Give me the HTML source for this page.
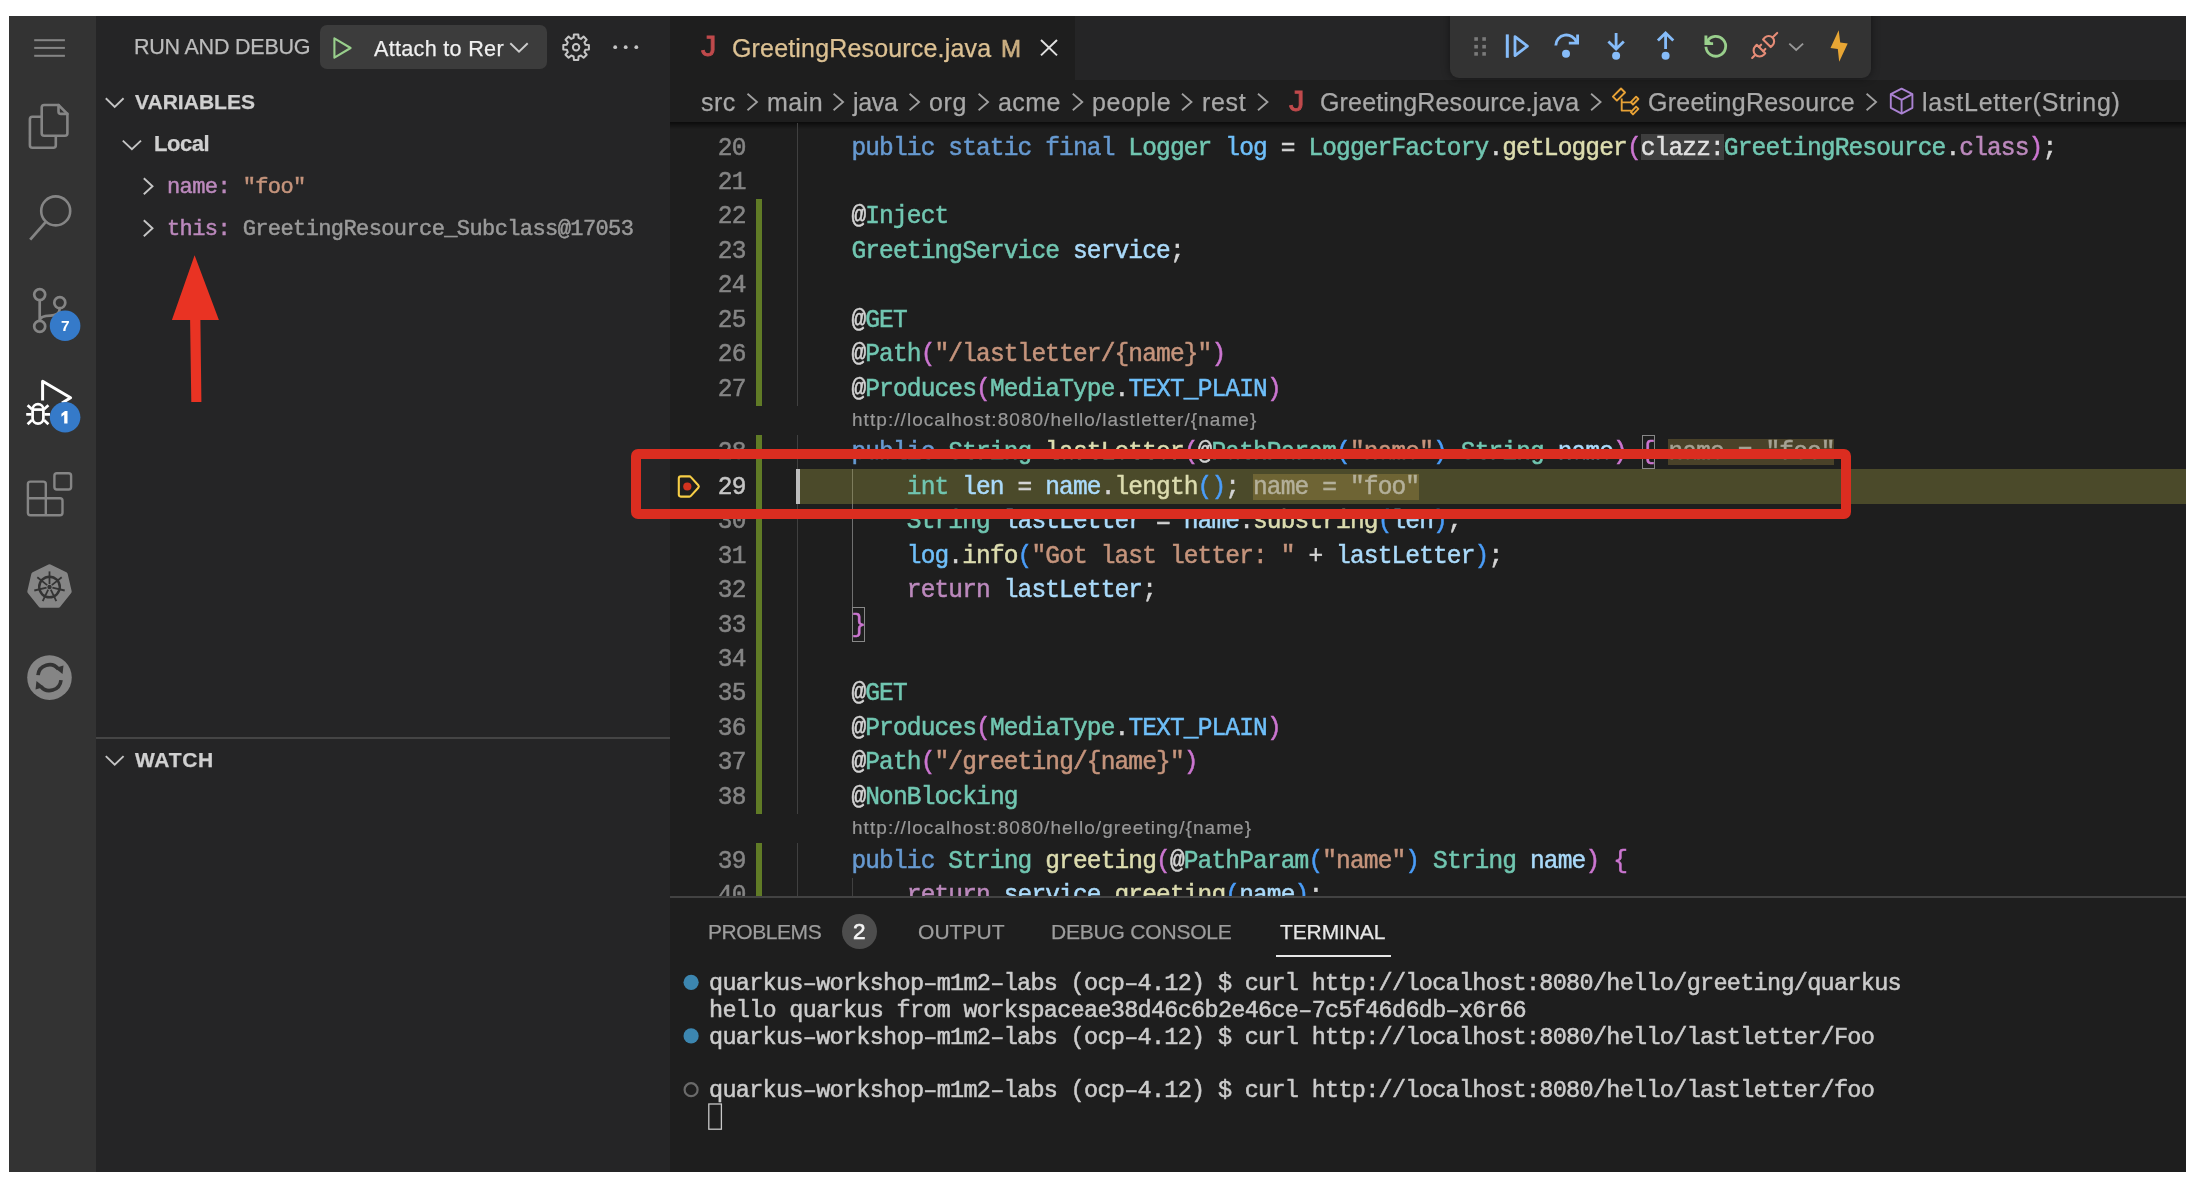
<!DOCTYPE html>
<html>
<head>
<meta charset="utf-8">
<title>GreetingResource.java - debug</title>
<style>
*{box-sizing:border-box;margin:0;padding:0}
html,body{width:2194px;height:1186px;overflow:hidden;background:#fff}
body{position:relative;font-family:"Liberation Sans",sans-serif;color:#ccc}
#win{position:absolute;left:0;top:0;width:2194px;height:1186px;background:#1e1e1e;clip-path:inset(16px 8px 14px 9px);overflow:hidden}
#win > div, #win > svg{position:absolute}

.ui{font-family:"Liberation Sans",sans-serif;white-space:pre;line-height:1;will-change:transform;-webkit-text-stroke-width:0.25px}
.mono{font-family:"Liberation Mono",monospace;white-space:pre;line-height:1;will-change:transform;-webkit-text-stroke-width:0.5px}
.num{font-family:"Liberation Mono",monospace;font-size:24.5px;letter-spacing:-0.855px;line-height:34.43px;height:34.43px;color:#858585;white-space:pre;text-align:right;left:689px;will-change:transform;-webkit-text-stroke-width:0.5px;width:56.56px}
.code{font-family:"Liberation Mono",monospace;font-size:24.5px;letter-spacing:-0.855px;line-height:34.43px;height:34.43px;white-space:pre;color:#d4d4d4;left:796.0px;will-change:transform;-webkit-text-stroke-width:0.5px}

.k{color:#679ad1}.t{color:#71c6b1}.v{color:#aadafa}.f{color:#dcdcaf}.s{color:#c5947c}.c{color:#bc89bd}.n{color:#6fbff9}
.b1{color:#f9d849}.b2{color:#cc76d1}.b3{color:#4a9df8}
.iv{color:#a5a193}
.iv2{color:#b4b09a}
.hint{color:#e0e0e0}
.lens{font-family:"Liberation Sans",sans-serif;font-size:19px;letter-spacing:1.05px;color:#999;white-space:pre;line-height:1;left:851.6px;will-change:transform;-webkit-text-stroke-width:0.2px}
.gb{left:756px;width:6px;background:#607b26}
.guide{width:1px;background:#404040}
.term{font-family:"Liberation Mono",monospace;font-size:23.5px;letter-spacing:-0.71px;color:#ccc;white-space:pre;line-height:1;left:708.6px;will-change:transform;-webkit-text-stroke-width:0.5px}
</style>
</head>
<body>
<div id="win">
<div style="left:0;top:0;width:95.7px;height:1186px;background:#333333"></div>
<svg style="left:0;top:0;" width="2194" height="1186" viewBox="0 0 2194 1186" fill="none"><rect x="34.2" y="39.2" width="30.7" height="2" fill="#858585"/><rect x="34.2" y="46.9" width="30.7" height="2" fill="#858585"/><rect x="34.2" y="54.8" width="30.7" height="2" fill="#858585"/><g stroke="#858585" stroke-width="2.6" stroke-linejoin="round" stroke-linecap="round"><path d="M44.2 105h14.3l8.9 8.9v19.4a2.5 2.5 0 0 1-2.5 2.5h-20.7a2.5 2.5 0 0 1-2.5-2.5v-25.8a2.5 2.5 0 0 1 2.5-2.5z"/><path d="M58.5 105v6.4a2.5 2.5 0 0 0 2.5 2.5h6.4"/><path d="M41.5 116.8h-9.1a2.5 2.5 0 0 0-2.5 2.5v25.9a2.5 2.5 0 0 0 2.5 2.5h20.9a2.5 2.5 0 0 0 2.5-2.5v-9"/></g><circle cx="55.7" cy="210.9" r="14.5" stroke="#858585" stroke-width="2.6"/><path d="M45.8 221.8L30.2 239.6" stroke="#858585" stroke-width="2.8" stroke-linecap="butt"/><g stroke="#858585" stroke-width="2.7"><circle cx="39.7" cy="294.6" r="5.5"/><circle cx="59.8" cy="302.7" r="5.5"/><circle cx="39.7" cy="326.4" r="5.5"/><path d="M39.7 300v21"/><path d="M59.8 308.1c0 5.5-3.5 7.6-9.5 7.6c-6 0-10.6 1.2-10.6 5.3"/></g><circle cx="65.1" cy="325.7" r="15.3" fill="#357ac9"/><g stroke="#ffffff" stroke-width="3" stroke-linejoin="round" stroke-linecap="butt"><path d="M42.6 400.6V381.2L70.6 397.8L62 403"/></g><g stroke="#ffffff" stroke-width="2.7" stroke-linecap="butt"><path d="M32.6 409.6a5.4 5.4 0 0 1 10.8 0v8.6a5.4 5.4 0 0 1-10.8 0z"/><path d="M32.6 409.6h10.8"/><path d="M31.6 414.4h-5.4M44.4 414.4h5.6M32 409.2l-4.4-4M44 409.2l4.4-4M32 420l-4.4 4.2M44 420l4.4 4.2"/></g><circle cx="65.1" cy="417.3" r="15.3" fill="#357ac9"/><path d="M67.5 411v12.5h-3.3v-8.7l-2.8 2v-3.1l3.6-2.7z" fill="#fff"/><g stroke="#858585" stroke-width="2.4" stroke-linejoin="round"><path d="M30.4 481.6h12.9a2.5 2.5 0 0 1 2.5 2.5v14.2h14.2a2.5 2.5 0 0 1 2.5 2.5v12a2.5 2.5 0 0 1-2.5 2.5h-29.6a2.5 2.5 0 0 1-2.5-2.5v-28.7a2.5 2.5 0 0 1 2.5-2.5z"/><path d="M27.9 498.3h17.9v17"/><rect x="54.4" y="473.2" width="16.7" height="16.3" rx="2.5"/></g><polygon points="49.5,566.6 65.4,574.3 69.4,591.5 58.4,605.4 40.6,605.4 29.6,591.5 33.6,574.3" fill="#858585" stroke="#858585" stroke-width="4.6" stroke-linejoin="round"/><circle cx="49.5" cy="587.0" r="10.3" stroke="#333" stroke-width="2.4"/><circle cx="49.5" cy="587.0" r="2.2" fill="#333"/><path d="M49.5 584.0L49.5 571.4" stroke="#333" stroke-width="1.8"/><path d="M51.8 585.1L61.7 577.3" stroke="#333" stroke-width="1.8"/><path d="M52.4 587.7L64.7 590.5" stroke="#333" stroke-width="1.8"/><path d="M50.8 589.7L56.3 601.1" stroke="#333" stroke-width="1.8"/><path d="M48.2 589.7L42.7 601.1" stroke="#333" stroke-width="1.8"/><path d="M46.6 587.7L34.3 590.5" stroke="#333" stroke-width="1.8"/><path d="M47.2 585.1L37.3 577.3" stroke="#333" stroke-width="1.8"/><circle cx="49.5" cy="677.6" r="22.3" fill="#858585"/><g stroke="#333" stroke-width="3.6" fill="none"><path d="M38.0 675.1a11.5 11.5 0 0 1 20.5-6"/><path d="M61.0 680.1a11.5 11.5 0 0 1-20.5 6"/></g><path d="M55.0 668.1l8.5-2.5l-1 8.5z" fill="#333"/><path d="M44.0 687.1l-8.5 2.5l1-8.5z" fill="#333"/></svg>
<div class="ui" style="left:60.60px;top:317.98px;font-size:15.5px;font-weight:700;color:#fff;letter-spacing:0px;-webkit-text-stroke-width:0;">7</div>
<div style="left:95.7px;top:0;width:574.3px;height:1186px;background:#252526"></div>
<div class="ui" style="left:134.00px;top:36.70px;font-size:21.5px;font-weight:400;color:#bbbbbb;letter-spacing:-0.22px;">RUN AND DEBUG</div>
<div style="left:319.8px;top:24.8px;width:227.6px;height:44.3px;border-radius:7px;background:#3c3c3c"></div>
<div class="ui" style="left:374.30px;top:38.22px;font-size:21.6px;font-weight:400;color:#f0f0f0;letter-spacing:0.3px;">Attach to Rer</div>
<svg style="left:0;top:0;" width="2194" height="1186" viewBox="0 0 2194 1186" fill="none"><path d="M334.4 38.3L350.6 48L334.4 57.7Z" stroke="#99cf8c" stroke-width="2.1" stroke-linejoin="round"/><path d="M510.3 43.3l8.7 8.3l8.7-8.3" stroke="#cccccc" stroke-width="2"/><polygon points="585.38,44.73 588.91,45.00 588.91,49.40 585.38,49.67 584.41,52.01 586.72,54.70 583.60,57.82 580.91,55.51 578.57,56.48 578.30,60.01 573.90,60.01 573.63,56.48 571.29,55.51 568.60,57.82 565.48,54.70 567.79,52.01 566.82,49.67 563.29,49.40 563.29,45.00 566.82,44.73 567.79,42.39 565.48,39.70 568.60,36.58 571.29,38.89 573.63,37.92 573.90,34.39 578.30,34.39 578.57,37.92 580.91,38.89 583.60,36.58 586.72,39.70 584.41,42.39" stroke="#c5c5c5" stroke-width="2" stroke-linejoin="round"/><circle cx="576.1" cy="47.2" r="3.2" stroke="#c5c5c5" stroke-width="2"/><circle cx="615.2" cy="47.2" r="1.9" fill="#c5c5c5"/><circle cx="625.7" cy="47.2" r="1.9" fill="#c5c5c5"/><circle cx="636.3" cy="47.2" r="1.9" fill="#c5c5c5"/><g stroke="#c5c5c5" stroke-width="1.9"><path d="M105.8 98.3l8.9 8.6l8.9-8.6"/><path d="M122.8 140.6l9.1 8.6l9.1-8.6"/><path d="M143.8 178.2l8.7 8l-8.7 8"/><path d="M143.8 220.2l8.7 8l-8.7 8"/><path d="M105.8 756.1l8.9 8.6l8.9-8.6"/></g><polygon points="194.6,255.2 218.9,319.9 200.4,319.9 201.4,402 191.3,402 190.1,319.9 171.9,319.9" fill="#e93323"/></svg>
<div class="ui" style="left:135.10px;top:91.32px;font-size:21px;font-weight:700;color:#d0d0d0;letter-spacing:0.02px;">VARIABLES</div>
<div class="ui" style="left:153.70px;top:132.58px;font-size:22px;font-weight:700;color:#d0d0d0;letter-spacing:-0.45px;">Local</div>
<div class="mono" style="left:167.30px;top:177.04px;font-size:22px;color:#ccc;letter-spacing:-0.6px;"><span style="color:#bc89bd">name:</span> <span style="color:#c5947c">"foo"</span></div>
<div class="mono" style="left:167.30px;top:219.04px;font-size:22px;color:#ccc;letter-spacing:-0.6px;"><span style="color:#bc89bd">this:</span> <span style="color:#9a9a9a">GreetingResource_Subclass@17053</span></div>
<div style="left:95.7px;top:737.2px;width:574.3px;height:2px;background:#454545"></div>
<div class="ui" style="left:135.00px;top:749.12px;font-size:21px;font-weight:700;color:#d0d0d0;letter-spacing:0.7px;">WATCH</div>
<div style="left:670px;top:0;width:1530px;height:80.2px;background:#252526"></div>
<div style="left:670px;top:0;width:405px;height:80.2px;background:#1e1e1e"></div>
<div class="ui" style="left:701.00px;top:32.45px;font-size:29px;font-weight:400;color:#c04a4c;letter-spacing:0px;-webkit-text-stroke:0.9px #c04a4c;transform:scaleX(1.06);transform-origin:left;">J</div>
<div class="ui" style="left:731.90px;top:36.14px;font-size:25px;font-weight:400;color:#dcc193;letter-spacing:0.17px;">GreetingResource.java</div>
<div class="ui" style="left:1001.40px;top:36.98px;font-size:24px;font-weight:400;color:#c9ad80;letter-spacing:0px;-webkit-text-stroke-width:0.7px;">M</div>
<svg style="left:0;top:0;" width="2194" height="1186" viewBox="0 0 2194 1186" fill="none"><path d="M1041 40l16 15.4M1057 40l-16 15.4" stroke="#e0e0e0" stroke-width="2"/></svg>
<div style="left:670px;top:122.4px;width:1530px;height:6.5px;background:linear-gradient(#00000099,#00000000)"></div>
<div class="ui" style="left:700.90px;top:89.64px;font-size:25px;font-weight:400;color:#a9a9a9;letter-spacing:0.51px;">src</div>
<div class="ui" style="left:766.90px;top:89.64px;font-size:25px;font-weight:400;color:#a9a9a9;letter-spacing:0.45px;">main</div>
<div class="ui" style="left:853.40px;top:89.64px;font-size:25px;font-weight:400;color:#a9a9a9;letter-spacing:-0.3px;">java</div>
<div class="ui" style="left:929.10px;top:89.64px;font-size:25px;font-weight:400;color:#a9a9a9;letter-spacing:0.6px;">org</div>
<div class="ui" style="left:998.30px;top:89.64px;font-size:25px;font-weight:400;color:#a9a9a9;letter-spacing:0.45px;">acme</div>
<div class="ui" style="left:1091.90px;top:89.64px;font-size:25px;font-weight:400;color:#a9a9a9;letter-spacing:0.7px;">people</div>
<div class="ui" style="left:1201.50px;top:89.64px;font-size:25px;font-weight:400;color:#a9a9a9;letter-spacing:0.65px;">rest</div>
<div class="ui" style="left:1289.00px;top:86.65px;font-size:29px;font-weight:400;color:#c04a4c;letter-spacing:0px;-webkit-text-stroke:0.9px #c04a4c;transform:scaleX(1.06);transform-origin:left;">J</div>
<div class="ui" style="left:1319.70px;top:89.64px;font-size:25px;font-weight:400;color:#a9a9a9;letter-spacing:0.17px;">GreetingResource.java</div>
<div class="ui" style="left:1647.90px;top:89.64px;font-size:25px;font-weight:400;color:#a9a9a9;letter-spacing:0.25px;">GreetingResource</div>
<div class="ui" style="left:1922.20px;top:89.64px;font-size:25px;font-weight:400;color:#a9a9a9;letter-spacing:0.77px;">lastLetter(String)</div>
<svg style="left:0;top:0;" width="2194" height="1186" viewBox="0 0 2194 1186" fill="none"><g stroke="#a0a0a0" stroke-width="1.8"><path d="M747.5 93.8l9.5 8.2l-9.5 8.2"/><path d="M833.6 93.8l9.5 8.2l-9.5 8.2"/><path d="M909.6 93.8l9.5 8.2l-9.5 8.2"/><path d="M978.6 93.8l9.5 8.2l-9.5 8.2"/><path d="M1072.8 93.8l9.5 8.2l-9.5 8.2"/><path d="M1182.0 93.8l9.5 8.2l-9.5 8.2"/><path d="M1258.0 93.8l9.5 8.2l-9.5 8.2"/><path d="M1591.1000000000001 93.8l9.5 8.2l-9.5 8.2"/><path d="M1866.6000000000001 93.8l9.5 8.2l-9.5 8.2"/></g><g stroke="#e8a236" stroke-width="1.9" stroke-linejoin="round"><path d="M1612.9 96.6L1621 88.5L1625 92.5L1616.9 100.6Z"/><path d="M1630.9 102.2L1636.1 96.7L1638.4 99L1633 104.5Z"/><path d="M1630.9 112.1L1636.1 106.6L1638.4 108.9L1633 114.4Z"/><path d="M1621.7 98.6V110.6H1631.5M1621.7 102.4H1631.1"/></g><g stroke="#aa82d2" stroke-width="1.9" stroke-linejoin="round"><path d="M1901.6 88.6l10.8 5.6v13.6l-10.8 5.8l-10.8-5.8v-13.6z"/><path d="M1890.8 94.2l10.8 5.6l10.8-5.6M1901.6 99.8v13.8"/></g></svg>
<div style="left:796.0px;top:469.37px;width:1400px;height:34.43px;background:#4b4a2a"></div>
<div class="gb" style="top:198.96px;height:206.58px"></div>
<div class="gb" style="top:434.94px;height:378.73px"></div>
<div class="gb" style="top:843.07px;height:56.93px"></div>
<div class="guide" style="left:797px;top:122.60px;height:282.94px"></div>
<div class="guide" style="left:797px;top:434.94px;height:378.73px"></div>
<div class="guide" style="left:797px;top:843.07px;height:56.93px"></div>
<div class="guide" style="left:852.3px;top:469.37px;height:137.72px;background:#707070"></div>
<div class="guide" style="left:852.3px;top:469.37px;height:34.43px;background:#7d7c5c"></div>
<div class="guide" style="left:852.3px;top:877.50px;height:30px"></div>
<div style="left:796.4px;top:469.37px;width:3.6px;height:34.43px;background:#bdbdbd"></div>
<div style="left:1640.55px;top:134.30px;width:83.07px;height:26px;background:#3e3e3e"></div>
<div style="left:1668.24px;top:439.14px;width:166.14px;height:26px;background:#4a4229"></div>
<div style="left:1252.88px;top:473.57px;width:166.14px;height:26px;background:#6e6434"></div>
<div class="num" style="top:131.56px;color:#858585;transform:scaleY(1.05);transform-origin:0 23.74px;">20</div>
<div class="code" style="top:131.56px;transform:scaleY(1.05);transform-origin:0 23.74px;">    <span class="k">public static final </span><span class="t">Logger </span><span class="n">log</span> = <span class="t">LoggerFactory</span>.<span class="f">getLogger</span><span class="b2">(</span><span class="hint">clazz:</span><span class="t">GreetingResource</span>.<span class="c">class</span><span class="b2">)</span>;</div>
<div class="num" style="top:165.99px;color:#858585;transform:scaleY(1.05);transform-origin:0 23.74px;">21</div>
<div class="num" style="top:200.42px;color:#858585;transform:scaleY(1.05);transform-origin:0 23.74px;">22</div>
<div class="code" style="top:200.42px;transform:scaleY(1.05);transform-origin:0 23.74px;">    @<span class="t">Inject</span></div>
<div class="num" style="top:234.85px;color:#858585;transform:scaleY(1.05);transform-origin:0 23.74px;">23</div>
<div class="code" style="top:234.85px;transform:scaleY(1.05);transform-origin:0 23.74px;">    <span class="t">GreetingService </span><span class="v">service</span>;</div>
<div class="num" style="top:269.28px;color:#858585;transform:scaleY(1.05);transform-origin:0 23.74px;">24</div>
<div class="num" style="top:303.71px;color:#858585;transform:scaleY(1.05);transform-origin:0 23.74px;">25</div>
<div class="code" style="top:303.71px;transform:scaleY(1.05);transform-origin:0 23.74px;">    @<span class="t">GET</span></div>
<div class="num" style="top:338.14px;color:#858585;transform:scaleY(1.05);transform-origin:0 23.74px;">26</div>
<div class="code" style="top:338.14px;transform:scaleY(1.05);transform-origin:0 23.74px;">    @<span class="t">Path</span><span class="b2">(</span><span class="s">"/lastletter/{name}"</span><span class="b2">)</span></div>
<div class="num" style="top:372.57px;color:#858585;transform:scaleY(1.05);transform-origin:0 23.74px;">27</div>
<div class="code" style="top:372.57px;transform:scaleY(1.05);transform-origin:0 23.74px;">    @<span class="t">Produces</span><span class="b2">(</span><span class="t">MediaType</span>.<span class="n">TEXT_PLAIN</span><span class="b2">)</span></div>
<div class="num" style="top:436.40px;color:#858585;transform:scaleY(1.05);transform-origin:0 23.74px;">28</div>
<div class="code" style="top:436.40px;transform:scaleY(1.05);transform-origin:0 23.74px;">    <span class="k">public </span><span class="t">String </span><span class="f">lastLetter</span><span class="b2">(</span>@<span class="t">PathParam</span><span class="b3">(</span><span class="s">"name"</span><span class="b3">)</span> <span class="t">String </span><span class="v">name</span><span class="b2">)</span> <span class="b2">{</span> <span class="iv">name = "foo"</span></div>
<div class="num" style="top:470.83px;color:#c6c6c6;transform:scaleY(1.05);transform-origin:0 23.74px;">29</div>
<div class="code" style="top:470.83px;transform:scaleY(1.05);transform-origin:0 23.74px;">        <span class="t">int </span><span class="v">len</span> = <span class="v">name</span>.<span class="f">length</span><span class="b3">()</span>; <span class="iv2">name = "foo"</span></div>
<div class="num" style="top:505.26px;color:#858585;transform:scaleY(1.05);transform-origin:0 23.74px;">30</div>
<div class="code" style="top:505.26px;transform:scaleY(1.05);transform-origin:0 23.74px;">        <span class="t">String </span><span class="v">lastLetter</span> = <span class="v">name</span>.<span class="f">substring</span><span class="b3">(</span><span class="v">len</span><span class="b3">)</span>;</div>
<div class="num" style="top:539.69px;color:#858585;transform:scaleY(1.05);transform-origin:0 23.74px;">31</div>
<div class="code" style="top:539.69px;transform:scaleY(1.05);transform-origin:0 23.74px;">        <span class="n">log</span>.<span class="f">info</span><span class="b3">(</span><span class="s">"Got last letter: "</span> + <span class="v">lastLetter</span><span class="b3">)</span>;</div>
<div class="num" style="top:574.12px;color:#858585;transform:scaleY(1.05);transform-origin:0 23.74px;">32</div>
<div class="code" style="top:574.12px;transform:scaleY(1.05);transform-origin:0 23.74px;">        <span class="c">return </span><span class="v">lastLetter</span>;</div>
<div class="num" style="top:608.55px;color:#858585;transform:scaleY(1.05);transform-origin:0 23.74px;">33</div>
<div class="code" style="top:608.55px;transform:scaleY(1.05);transform-origin:0 23.74px;">    <span class="b2">}</span></div>
<div class="num" style="top:642.98px;color:#858585;transform:scaleY(1.05);transform-origin:0 23.74px;">34</div>
<div class="num" style="top:677.41px;color:#858585;transform:scaleY(1.05);transform-origin:0 23.74px;">35</div>
<div class="code" style="top:677.41px;transform:scaleY(1.05);transform-origin:0 23.74px;">    @<span class="t">GET</span></div>
<div class="num" style="top:711.84px;color:#858585;transform:scaleY(1.05);transform-origin:0 23.74px;">36</div>
<div class="code" style="top:711.84px;transform:scaleY(1.05);transform-origin:0 23.74px;">    @<span class="t">Produces</span><span class="b2">(</span><span class="t">MediaType</span>.<span class="n">TEXT_PLAIN</span><span class="b2">)</span></div>
<div class="num" style="top:746.27px;color:#858585;transform:scaleY(1.05);transform-origin:0 23.74px;">37</div>
<div class="code" style="top:746.27px;transform:scaleY(1.05);transform-origin:0 23.74px;">    @<span class="t">Path</span><span class="b2">(</span><span class="s">"/greeting/{name}"</span><span class="b2">)</span></div>
<div class="num" style="top:780.70px;color:#858585;transform:scaleY(1.05);transform-origin:0 23.74px;">38</div>
<div class="code" style="top:780.70px;transform:scaleY(1.05);transform-origin:0 23.74px;">    @<span class="t">NonBlocking</span></div>
<div class="num" style="top:844.53px;color:#858585;transform:scaleY(1.05);transform-origin:0 23.74px;">39</div>
<div class="code" style="top:844.53px;transform:scaleY(1.05);transform-origin:0 23.74px;">    <span class="k">public </span><span class="t">String </span><span class="f">greeting</span><span class="b2">(</span>@<span class="t">PathParam</span><span class="b3">(</span><span class="s">"name"</span><span class="b3">)</span> <span class="t">String </span><span class="v">name</span><span class="b2">)</span> <span class="b2">{</span></div>
<div class="num" style="top:878.96px;color:#858585;transform:scaleY(1.05);transform-origin:0 23.74px;">40</div>
<div class="code" style="top:878.96px;transform:scaleY(1.05);transform-origin:0 23.74px;">        <span class="c">return </span><span class="v">service</span>.<span class="f">greeting</span><span class="b3">(</span><span class="v">name</span><span class="b3">)</span>;</div>
<div style="left:1641.55px;top:434.94px;width:13.04px;height:34.43px;border:1.3px solid #888"></div>
<div style="left:852.38px;top:607.09px;width:13.04px;height:34.43px;border:1.3px solid #888"></div>
<div class="lens" style="top:410.22px">http://localhost:8080/hello/lastletter/{name}</div>
<div class="lens" style="top:818.22px">http://localhost:8080/hello/greeting/{name}</div>
<svg style="left:0;top:0;" width="2194" height="1186" viewBox="0 0 2194 1186" fill="none"><path d="M680.8 476.4h8.6a2 2 0 0 1 1.5 0.7l7.4 8.2a1.8 1.8 0 0 1 0 2.4l-7.4 8.2a2 2 0 0 1-1.5 0.7h-8.6a2 2 0 0 1-2-2v-16.2a2 2 0 0 1 2-2z" stroke="#f7ce46" stroke-width="2.1" stroke-linejoin="round"/><circle cx="687.3" cy="486.5" r="4.1" fill="#d2331f"/></svg>
<div style="left:670px;top:897.4px;width:1530px;height:300px;background:#1e1e1e"></div>
<div style="left:670px;top:896px;width:1530px;height:2px;background:#424242"></div>
<div class="ui" style="left:707.60px;top:921.42px;font-size:21px;font-weight:400;color:#9d9d9d;letter-spacing:-0.43px;">PROBLEMS</div>
<div style="left:842.1px;top:914.3px;width:34.8px;height:34.8px;border-radius:50%;background:#4d4d4d"></div>
<div class="ui" style="left:853.00px;top:920.55px;font-size:22.5px;font-weight:400;color:#f4f4f4;letter-spacing:0px;-webkit-text-stroke-width:0.6px;">2</div>
<div class="ui" style="left:917.80px;top:921.42px;font-size:21px;font-weight:400;color:#9d9d9d;letter-spacing:0.06px;">OUTPUT</div>
<div class="ui" style="left:1051.40px;top:921.42px;font-size:21px;font-weight:400;color:#9d9d9d;letter-spacing:-0.2px;">DEBUG CONSOLE</div>
<div class="ui" style="left:1280.20px;top:921.42px;font-size:21px;font-weight:400;color:#e7e7e7;letter-spacing:-0.11px;">TERMINAL</div>
<div style="left:1276.4px;top:954.9px;width:114.7px;height:2.4px;background:#e7e7e7"></div>
<div class="term" style="top:971.89px">quarkus–workshop–m1m2–labs (ocp–4.12) $ curl http://localhost:8080/hello/greeting/quarkus</div>
<div class="term" style="top:998.89px">hello quarkus from workspaceae38d46c6b2e46ce–7c5f46d6db–x6r66</div>
<div class="term" style="top:1025.69px">quarkus–workshop–m1m2–labs (ocp–4.12) $ curl http://localhost:8080/hello/lastletter/Foo</div>
<div class="term" style="top:1079.39px">quarkus–workshop–m1m2–labs (ocp–4.12) $ curl http://localhost:8080/hello/lastletter/foo</div>
<svg style="left:0;top:0;" width="2194" height="1186" viewBox="0 0 2194 1186" fill="none"><circle cx="691.1" cy="982.3" r="7.6" fill="#3c86b0"/><circle cx="691.1" cy="1035.9" r="7.6" fill="#3c86b0"/><circle cx="691.1" cy="1089.7" r="6.5" stroke="#6a6a6a" stroke-width="2.2"/><rect x="708.8" y="1104" width="12.6" height="25.2" stroke="#c8c8c8" stroke-width="1.3"/></svg>
<div style="left:1449.6px;top:0;width:421.2px;height:78.2px;background:#333333;border-radius:0 0 9px 9px;box-shadow:0 0 8px rgba(0,0,0,0.45)"></div>
<svg style="left:0;top:0;" width="2194" height="1186" viewBox="0 0 2194 1186" fill="none"><rect x="1474.3" y="37.2" width="3.6" height="3.6" fill="#7a7a7a"/><rect x="1474.3" y="44.900000000000006" width="3.6" height="3.6" fill="#7a7a7a"/><rect x="1474.3" y="52.1" width="3.6" height="3.6" fill="#7a7a7a"/><rect x="1482.3" y="37.2" width="3.6" height="3.6" fill="#7a7a7a"/><rect x="1482.3" y="44.900000000000006" width="3.6" height="3.6" fill="#7a7a7a"/><rect x="1482.3" y="52.1" width="3.6" height="3.6" fill="#7a7a7a"/><rect x="1505.8" y="34.4" width="3" height="23.4" fill="#86bcf9"/><path d="M1515 36.6L1527.4 46.1L1515 55.6Z" stroke="#86bcf9" stroke-width="2.8" stroke-linejoin="round"/><path d="M1555.8 45.5a10.6 10.6 0 0 1 20.6-3.4" stroke="#86bcf9" stroke-width="2.8"/><path d="M1568.8 43.2h8.8v-8.8" stroke="#86bcf9" stroke-width="2.8"/><circle cx="1566" cy="53.7" r="4.0" fill="#86bcf9"/><path d="M1616.1 33v15.4M1608.4 41.4l7.7 7.6l7.7-7.6" stroke="#86bcf9" stroke-width="2.8"/><circle cx="1616.1" cy="55.8" r="4.0" fill="#86bcf9"/><path d="M1665.6 49v-15.4M1657.9 40.6l7.7-7.6l7.7 7.6" stroke="#86bcf9" stroke-width="2.8"/><circle cx="1665.6" cy="55.8" r="4.0" fill="#86bcf9"/><path d="M1707.3 41.2a9.9 9.9 0 1 1-1.4 5.6" stroke="#99cf8c" stroke-width="2.8"/><path d="M1705.9 35.4v8.2h7.2" stroke="#99cf8c" stroke-width="2.9"/><path d="M1706 37.4l6 6h-6z" fill="#99cf8c"/><g stroke="#e58c77" stroke-width="2.1" stroke-linecap="round" stroke-linejoin="round" transform="translate(1764.9 45.2) rotate(-45)"><path d="M-18 0h4.5"/><path d="M-5.5 -6h-2a6 6 0 0 0 0 12h2z"/><path d="M-5.5 -3h3.2M-5.5 3h3.2"/><path d="M2.8 -5.4h2.6a5.4 5.4 0 0 1 0 10.8h-2.6z"/><path d="M10.8 0h6.6"/></g><path d="M1789.3 43.6l6.9 6.4l6.9-6.4" stroke="#999" stroke-width="1.9"/><path d="M1838.7 30.2L1830.5 48.1L1837.8 49L1839.2 61.7L1847.7 43.6L1840.2 42.6Z" fill="#e8a634"/></svg>
<div style="left:631.2px;top:449.1px;width:1219.8px;height:69.8px;border:10px solid #db2d20;border-radius:7px/7px"></div>
</div>
</body>
</html>
